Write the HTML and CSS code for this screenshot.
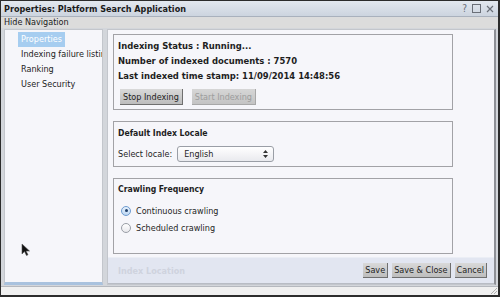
FILE: index.html
```html
<!DOCTYPE html>
<html lang="en">
<head>
    <meta charset="UTF-8">
    <title>Properties: Platform Search Application</title>
    <link rel="stylesheet" href="styles.css">
</head>
<body>
    <div class="window">
        <div class="titlebar">
            <span class="title">Properties: Platform Search Application</span>
            <div class="win-icons">
                <span class="help">?</span>
                <svg width="9" height="9" viewBox="0 0 9 9"><rect x="0.5" y="0.5" width="8" height="8" fill="none" stroke="#6a6f78" stroke-width="1"/></svg>
                <svg width="8" height="8" viewBox="0 0 8 8"><path d="M1 1 L7 7 M7 1 L1 7" stroke="#6a6f78" stroke-width="1.2"/></svg>
            </div>
        </div>
        <div class="subbar">Hide Navigation</div>

        <div class="body">
            <div class="nav">
                <div class="nav-item selected">Properties</div>
                <div class="nav-item">Indexing failure listing</div>
                <div class="nav-item">Ranking</div>
                <div class="nav-item">User Security</div>
            </div>

            <div class="main">
                <div class="content">
                    <div class="box status-box">
                        <div class="line">Indexing Status : Running...</div>
                        <div class="line">Number of indexed documents : 7570</div>
                        <div class="line">Last indexed time stamp: 11/09/2014 14:48:56</div>
                        <div class="btn-row">
                            <button class="btn">Stop Indexing</button>
                            <button class="btn" disabled>Start Indexing</button>
                        </div>
                    </div>

                    <div class="box locale-box">
                        <div class="box-title">Default Index Locale</div>
                        <div class="field">
                            <span>Select locale:</span>
                            <div class="select">
                                <span>English</span>
                                <svg width="5" height="8" viewBox="0 0 5 8"><path d="M2.5 0 L5 3 L0 3 Z M2.5 8 L5 5 L0 5 Z" fill="#333"/></svg>
                            </div>
                        </div>
                    </div>

                    <div class="box crawl-box">
                        <div class="box-title">Crawling Frequency</div>
                        <div class="radio-row"><span class="radio checked"></span>Continuous crawling</div>
                        <div class="radio-row"><span class="radio"></span>Scheduled crawling</div>
                    </div>
                </div>

                <div class="footer">
                    <span class="faded">Index Location</span>
                    <div class="footer-btns">
                        <button class="btn">Save</button>
                        <button class="btn">Save &amp; Close</button>
                        <button class="btn">Cancel</button>
                    </div>
                </div>
            </div>
        </div>

        <div class="statusbar">
            <svg class="grip" width="8" height="8" viewBox="0 0 8 8"><path d="M7 1 L1 7 M7 4 L4 7" stroke="#b0b0b0" stroke-width="1"/></svg>
        </div>

        <svg class="cursor" width="10" height="14" viewBox="0 0 10 14"><path d="M1 1 L1 11 L3.5 8.5 L5.5 12.5 L7 11.8 L5 8 L8.5 8 Z" fill="#111" stroke="#555" stroke-width="0.6"/></svg>
    </div>
</body>
</html>
```

FILE: styles.css
```css
* {
    box-sizing: border-box;
}

body {
    margin: 0;
    font-family: "DejaVu Sans Condensed", "DejaVu Sans", sans-serif;
    font-stretch: condensed;
    font-size: 9px;
    color: #1e1e1e;
    background: #fff;
}

.window {
    position: relative;
    width: 500px;
    height: 297px;
    border: 1px solid #2c2c2c;
    border-right-width: 2px;
    border-bottom-width: 2px;
    background: #d3d6db;
    display: flex;
    flex-direction: column;
}

.titlebar {
    height: 16px;
    display: flex;
    align-items: center;
    justify-content: space-between;
    padding: 0 4px 0 3px;
    background: linear-gradient(#e3e8ef, #ccd4df);
    border-bottom: 1px solid #a9b1bd;
}

.title {
    font-weight: bold;
    font-size: 9px;
    color: #1a1a1a;
}

.win-icons {
    display: flex;
    align-items: center;
    gap: 5px;
    color: #6a6f78;
}

.help {
    font-size: 10px;
}

.subbar {
    height: 11px;
    line-height: 11px;
    padding-left: 3px;
    background: #dcdcdc;
    color: #222;
}

.body {
    flex: 1;
    display: flex;
    gap: 4px;
    padding: 1px 2px 1px 3px;
    min-height: 0;
}

.nav {
    width: 99px;
    display: flex;
    flex-direction: column;
    align-items: flex-start;
    background: #f6f6fa;
    border: 1px solid #c3c6cc;
    border-bottom: 3px solid #a9c2de;
    padding: 2px 0 0 13px;
    overflow: hidden;
}

.nav-item {
    height: 15px;
    line-height: 15px;
    padding-left: 3px;
    white-space: nowrap;
    color: #222;
}

.nav-item.selected {
    background: #a6cdf0;
    color: #fff;
    padding: 0 3px;
}

.main {
    flex: 1;
    display: flex;
    flex-direction: column;
    background: #f6f6fa;
    border: 1px solid #c3c6cc;
    border-right: 2px solid #8e9096;
}

.content {
    flex: 1;
    padding: 4px 0 0 5px;
    overflow: hidden;
}

.box {
    width: 340px;
    border: 1px solid #a2a2a6;
    padding: 3px 4px 4px 4px;
    margin-bottom: 11px;
}

.status-box .line {
    font-weight: bold;
    font-size: 9.4px;
    height: 15px;
    line-height: 15px;
}

.btn-row {
    display: flex;
    gap: 9px;
    margin-top: 6px;
    padding-left: 2px;
}

.btn {
    font-family: inherit;
    font-stretch: condensed;
    font-size: 9px;
    color: #1e1e1e;
    height: 16px;
    padding: 0 3px;
    border: none;
    border-right: 1px solid #6f6f6f;
    border-bottom: 1px solid #6f6f6f;
    background: linear-gradient(#d9d9d9, #bdbdbd);
}

.btn:disabled {
    color: #9d9d9d;
    background: linear-gradient(#d6d6d6, #c4c4c4);
    border-color: #a8a8a8;
}

.box-title {
    font-weight: bold;
    font-size: 8.6px;
    height: 16px;
    line-height: 16px;
}

.locale-box {
    padding-bottom: 4px;
}

.field {
    display: flex;
    align-items: center;
    gap: 5px;
    margin-top: 5px;
}

.select {
    width: 97px;
    height: 16px;
    display: flex;
    align-items: center;
    justify-content: space-between;
    padding: 0 5px 0 6px;
    border: 1px solid #9a9ea6;
    border-radius: 3px;
    background: linear-gradient(#ffffff, #e9eaee);
}

.crawl-box {
    padding-top: 2px;
    padding-bottom: 17px;
}

.crawl-box .box-title {
    margin-bottom: 5px;
}

.radio-row {
    display: flex;
    align-items: center;
    gap: 5px;
    height: 17px;
    padding-left: 3px;
}

.radio {
    width: 10px;
    height: 10px;
    border-radius: 50%;
    border: 1px solid #9a9ea6;
    background: linear-gradient(#fff, #e8e8ec);
    display: flex;
    align-items: center;
    justify-content: center;
}

.radio.checked {
    border-color: #6d9bd0;
    background: linear-gradient(#e6f1fc, #bcd6f2);
}

.radio.checked::after {
    content: "";
    width: 3px;
    height: 3px;
    border-radius: 50%;
    background: #1f3f6a;
}

.footer {
    height: 27px;
    display: flex;
    align-items: center;
    justify-content: space-between;
    padding: 0 7px 0 10px;
    background: #e2e6f1;
    border-top: 1px solid #ebeef5;
    border-bottom: 1px solid #b8bcc4;
}

.faded {
    font-weight: bold;
    color: #cfd3de;
}

.footer-btns {
    display: flex;
    gap: 4px;
}

.footer-btns .btn {
    height: 15px;
    padding: 0 2px;
}

.statusbar {
    position: relative;
    height: 9px;
    background: #f0f0f0;
    border-top: 1px solid #b5b8be;
}

.grip {
    position: absolute;
    right: 0;
    bottom: 0;
}

.cursor {
    position: absolute;
    left: 20px;
    top: 242px;
}
```
